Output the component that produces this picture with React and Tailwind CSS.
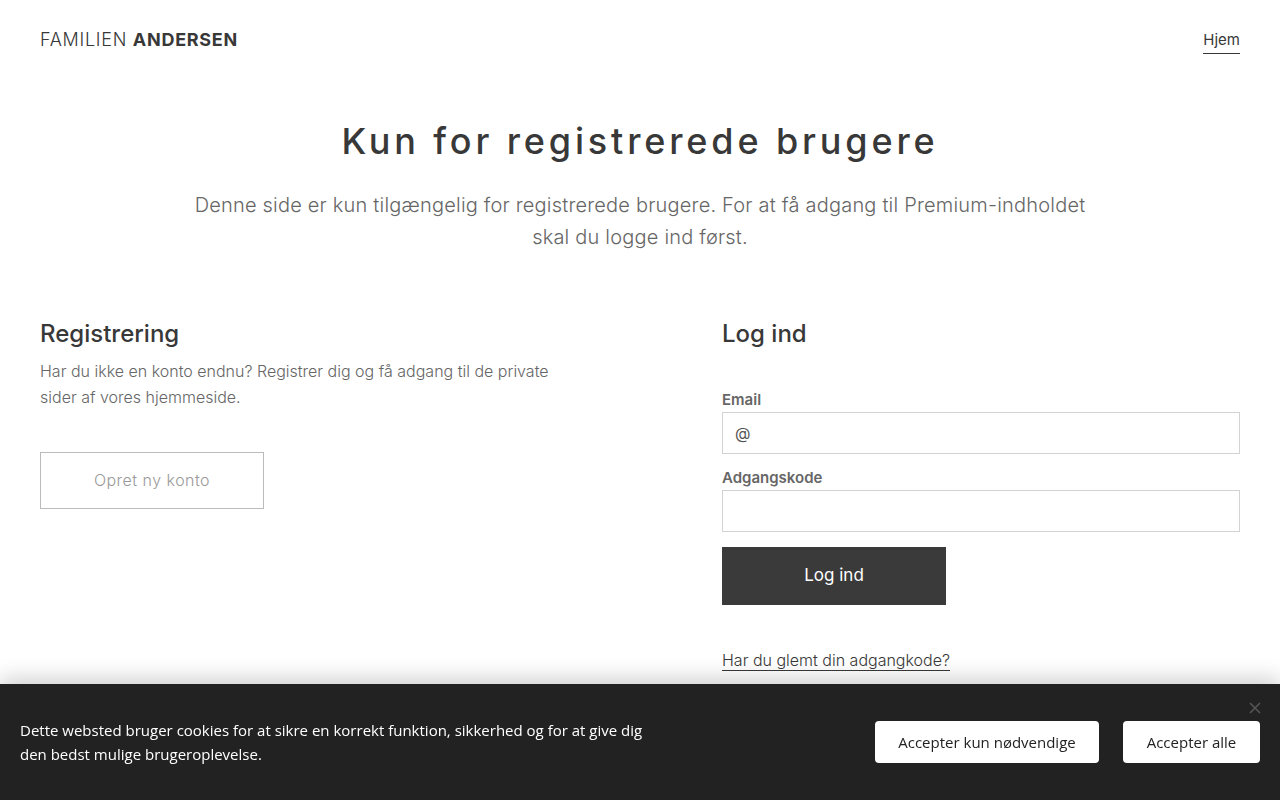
import React from 'react';

const sans = "font-['Inter','Liberation_Sans',sans-serif]";

const CookieBar = () => (
  <div className="fixed bottom-0 left-0 right-0 h-[116px] bg-[#222222] shadow-[0_-6px_20px_rgba(0,0,0,0.18)] font-['Open_Sans',sans-serif]">
    <div className="flex items-center justify-between h-full pl-5 pr-5">
      <p className="text-white text-[15px] leading-6 w-[640px]">
        Dette websted bruger cookies for at sikre en korrekt funktion, sikkerhed og for at give dig den bedst mulige brugeroplevelse.
      </p>
      <div className="flex gap-6">
        <button className="w-[224px] h-[42px] bg-white rounded-[4px] text-[#222] text-[15px]">Accepter kun nødvendige</button>
        <button className="w-[137px] h-[42px] bg-white rounded-[4px] text-[#222] text-[15px]">Accepter alle</button>
      </div>
    </div>
    <button className="absolute right-[18px] top-[17px] text-[#555] leading-none">
      <svg width="14" height="14" viewBox="0 0 14 14" stroke="currentColor" strokeWidth="1.6">
        <path d="M2 2L12 12M12 2L2 12" />
      </svg>
    </button>
  </div>
);

export default function App() {
  return (
    <div className={`min-h-[800px] bg-white text-[#383838] ${sans}`}>
      <header className="flex items-center justify-between px-10 pt-[25px]">
        <div className="text-[18px] tracking-[0.04em] text-[#383838]">
          <span className="font-light">FAMILIEN </span>
          <span className="font-bold">ANDERSEN</span>
        </div>
        <a className="text-[15px] text-[#383838] border-b border-[#383838] pb-[1px] mt-1">Hjem</a>
      </header>

      <section className="text-center pt-[62px]">
        <h1 className="text-[36px] font-medium tracking-[0.107em] leading-[50px] text-[#383838]">Kun for registrerede brugere</h1>
        <p className="mt-[23px] mx-auto max-w-[920px] text-[20px] leading-8 tracking-[0.01em] text-[#666] font-light">
          Denne side er kun tilgængelig for registrerede brugere. For at få adgang til Premium-indholdet skal du logge ind først.
        </p>
      </section>

      <section className="grid grid-cols-2 gap-[164px] px-10 pt-[65px]">
        <div>
          <h2 className="text-[24px] font-medium leading-8 text-[#383838]">Registrering</h2>
          <p className="mt-[8px] text-[16px] leading-[26px] text-[#666] font-light">
            Har du ikke en konto endnu? Registrer dig og få adgang til de private sider af vores hjemmeside.
          </p>
          <button className="mt-[42px] w-[224px] h-[57px] border border-[#bbb] text-[#999] text-[16px] tracking-[0.03em] font-light">
            Opret ny konto
          </button>
        </div>
        <div>
          <h2 className="text-[24px] font-medium leading-8 text-[#383838]">Log ind</h2>
          <label className="block mt-[40px] text-[15px] font-semibold text-[#666] leading-5">Email</label>
          <div className="mt-[2px] h-[42px] border border-[#d3d3d3] flex items-center px-3 text-[16px] text-[#555]">@</div>
          <label className="block mt-[14px] text-[15px] font-semibold text-[#666] leading-5">Adgangskode</label>
          <div className="mt-[2px] h-[42px] border border-[#d3d3d3]"></div>
          <button className="mt-[15px] w-[224px] h-[58px] bg-[#3a3a3a] text-white text-[17px]">Log ind</button>
          <div className="mt-[43px]">
            <a className="text-[16px] text-[#383838] border-b border-[#383838] font-light">Har du glemt din adgangkode?</a>
          </div>
        </div>
      </section>

      <CookieBar />
    </div>
  );
}
